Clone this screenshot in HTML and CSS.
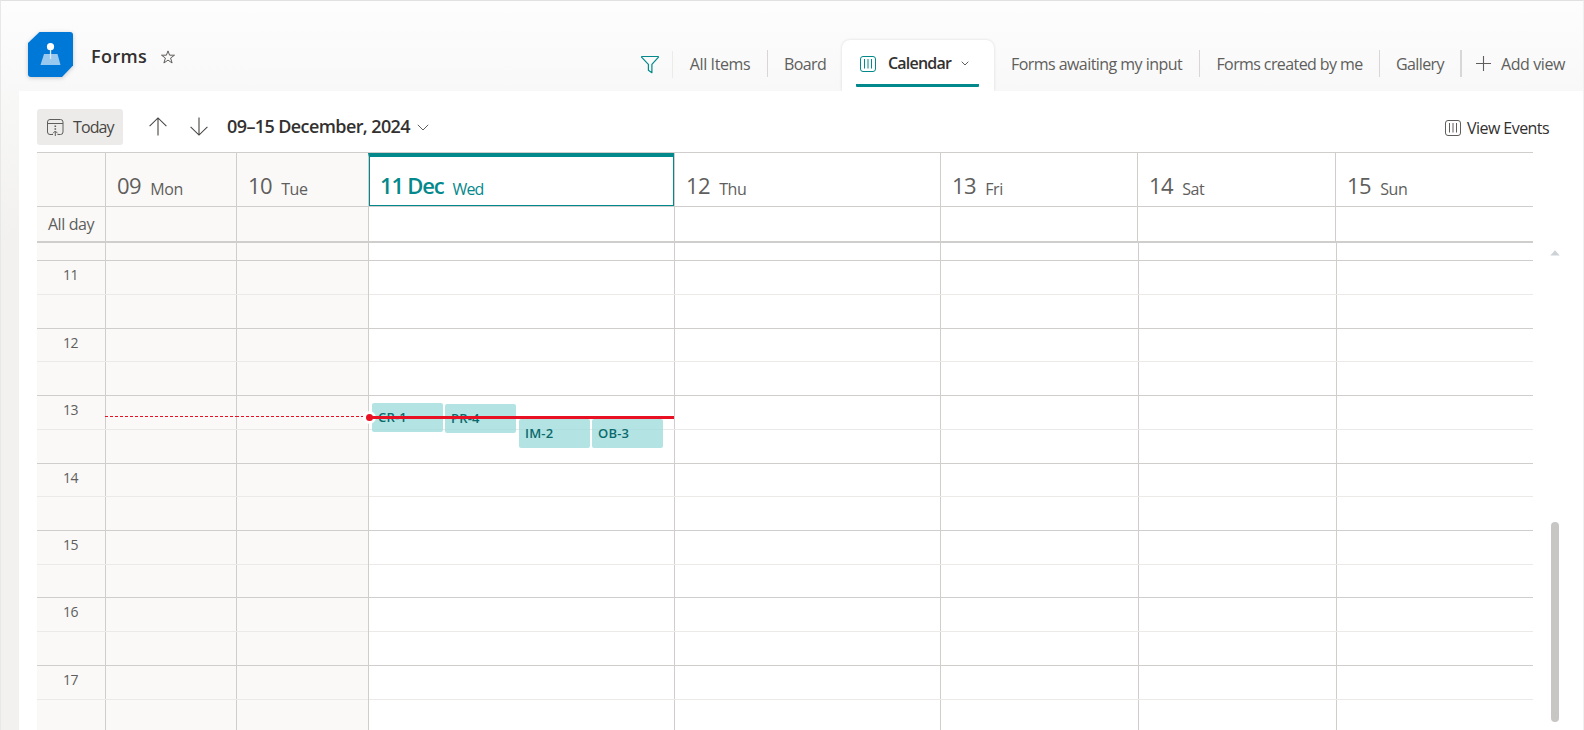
FILE: index.html
```html
<!DOCTYPE html>
<html lang="en">
<head>
    <meta charset="UTF-8">
    <meta name="viewport" content="width=device-width, initial-scale=1.0">
    <title>Forms - Calendar</title>
    <link rel="stylesheet" href="styles.css">
</head>
<body>
    <div class="app">
        <header class="header">
            <div class="brand">
                <svg class="logo" width="45" height="45" viewBox="0 0 45 45">
                    <path d="M11.500 0H42a3 3 0 0 1 3 3v30.500L34 45H3a3 3 0 0 1-3-3V11z" fill="#0078d7"/>
                    <path d="M16 22h13.500l3 11H12.500z" fill="#99c9ef"/>
                    <path d="M21.900 16h1.300v11h-1.300z" fill="#d8ebfa"/>
                    <circle cx="22.500" cy="14.700" r="3.600" fill="#fff"/>
                </svg>
                <h1 class="title">Forms</h1>
                <svg class="star" width="14" height="14" viewBox="0 0 14 14">
                    <path d="M7 .9l1.600 4.300h4.900L9.600 8l1.500 5L7 10.100 2.900 13l1.500-5L.5 5.200h4.900z" fill="none" stroke="#605e5c" stroke-width="1"/>
                </svg>
            </div>
            <nav class="views">
                <button class="filter">
                    <svg width="20" height="20" viewBox="0 0 20 20">
                        <path d="M1.800 1.500h16.400l.3.700-6.600 7.200v8.300l-3.500-2.500V9.400L1.500 2.200z" fill="none" stroke="#03888b" stroke-width="1.200" stroke-linejoin="round"/>
                    </svg>
                </button>
                <a class="view view-all">All Items</a>
                <a class="view view-board">Board</a>
                <a class="view view-active">
                    <span class="view-label">
                        <svg width="16" height="16" viewBox="0 0 16 16" fill="none" stroke="#03888b">
                            <rect x=".5" y=".5" width="15" height="15" rx="2.500"/>
                            <path d="M4.500 3v9.500M8 3v9.500M11.500 3v9.500"/>
                        </svg>
                        <b>Calendar</b>
                        <svg class="caret" width="8" height="5" viewBox="0 0 8 5"><path d="M.7.7L4 4 7.300.7" fill="none" stroke="#605e5c"/></svg>
                    </span>
                </a>
                <a class="view view-awaiting">Forms awaiting my input</a>
                <a class="view view-created">Forms created by me</a>
                <a class="view view-gallery">Gallery</a>
                <a class="view view-add">
                    <svg width="15" height="15" viewBox="0 0 15 15"><path d="M7.500 0v15M0 7.500h15" stroke="#605e5c" stroke-width="1.100"/></svg>
                    <span>Add view</span>
                </a>
            </nav>
        </header>

        <main class="panel">
            <div class="toolbar">
                <button class="today">
                    <svg width="17" height="17" viewBox="0 0 17 17" fill="none" stroke="#605e5c">
                        <path d="M6 15.500H3A2.500 2.500 0 0 1 .5 13V3A2.500 2.500 0 0 1 3 .5h10.500A2.500 2.500 0 0 1 16 3v10a2.500 2.500 0 0 1-2.500 2.500h-3M.5 4.500H16"/>
                        <path d="M8.300 17v-4.500M6 14.300l2.300-2.300 2.300 2.300"/>
                        <path d="M7.500 7.200h1.600M7.500 10h1.600" stroke-width="1.400"/>
                    </svg>
                    <span>Today</span>
                </button>
                <svg class="arrow-up" width="18" height="19" viewBox="0 0 18 19"><path d="M9 18.500V1M.6 9.200L9 .9l8.400 8.300" fill="none" stroke="#484644" stroke-width="1.100"/></svg>
                <svg class="arrow-down" width="18" height="19" viewBox="0 0 18 19"><path d="M9 .5V18M.6 9.800L9 18.100l8.400-8.300" fill="none" stroke="#484644" stroke-width="1.100"/></svg>
                <span class="range">09–15 December, 2024</span>
                <svg class="range-caret" width="12" height="7" viewBox="0 0 12 7"><path d="M.8.8L6 6 11.200.8" fill="none" stroke="#605e5c"/></svg>
                <a class="view-events">
                    <svg width="16" height="16" viewBox="0 0 16 16" fill="none" stroke="#605e5c">
                        <rect x=".5" y=".5" width="15" height="15" rx="2.500"/>
                        <path d="M4.500 3v9.500M8 3v9.500M11.500 3v9.500"/>
                    </svg>
                    <span>View Events</span>
                </a>
            </div>

            <div class="calendar">
                <div class="days">
                    <div class="past"></div>
                    <div class="day past"><b>09</b><span>Mon</span></div>
                    <div class="day past"><b>10</b><span>Tue</span></div>
                    <div class="day current"><b>11 Dec</b><span>Wed</span></div>
                    <div class="day"><b>12</b><span>Thu</span></div>
                    <div class="day"><b>13</b><span>Fri</span></div>
                    <div class="day"><b>14</b><span>Sat</span></div>
                    <div class="day"><b>15</b><span>Sun</span></div>
                </div>
                <div class="all-day">
                    <div class="past">All day</div>
                    <div class="cell past"></div>
                    <div class="cell past"></div>
                    <div class="cell"></div>
                    <div class="cell"></div>
                    <div class="cell"></div>
                    <div class="cell"></div>
                    <div class="cell"></div>
                </div>

                <div class="scroll-area">
                    <div class="hours">
                        <div class="slot"></div>
                        <div class="slot hour">11</div>
                        <div class="slot half"></div>
                        <div class="slot hour">12</div>
                        <div class="slot half"></div>
                        <div class="slot hour">13</div>
                        <div class="slot half"></div>
                        <div class="slot hour">14</div>
                        <div class="slot half"></div>
                        <div class="slot hour">15</div>
                        <div class="slot half"></div>
                        <div class="slot hour">16</div>
                        <div class="slot half"></div>
                        <div class="slot hour">17</div>
                        <div class="slot half"></div>
                    </div>
                    <div class="columns">
                        <div class="past"></div>
                        <div class="cell past"><i class="now-dashed"></i></div>
                        <div class="cell past"><i class="now-dashed last"></i></div>
                        <div class="cell today-column">
                            <div class="event event-cr">CR-1</div>
                            <div class="event event-pr">PR-4</div>
                            <div class="event event-im">IM-2</div>
                            <div class="event event-ob">OB-3</div>
                            <i class="now-dot"></i>
                            <i class="now-line"></i>
                        </div>
                        <div class="cell"></div>
                        <div class="cell"></div>
                        <div class="cell"></div>
                        <div class="cell"></div>
                    </div>
                </div>
            </div>

            <div class="scrollbar">
                <svg width="10" height="6" viewBox="0 0 10 6"><path d="M5 .3L9.700 5.500H.3z" fill="#cdd2d6"/></svg>
                <div class="thumb"></div>
            </div>
        </main>
    </div>
</body>
</html>
```
FILE: styles.css
```css
* {
    box-sizing: border-box;
}

body {
    margin: 0;
    font-family: "Segoe UI", "Open Sans", sans-serif;
    font-size: 16px;
    line-height: 20px;
    letter-spacing: -0.4px;
    color: #605e5c;
    overflow: hidden;
}

button {
    font: inherit;
    letter-spacing: inherit;
    color: inherit;
    border: none;
    padding: 0;
}

svg {
    display: block;
    flex: none;
}

.app {
    height: 730px;
    border-top: 1px solid #e1e1e1;
    border-left: 1px solid #e8e8e8;
    border-right: 1px solid #f0f0f0;
    background: linear-gradient(#fdfdfd, #f8f8f7 90px, #f2f1ef 240px, #f2f1ef);
}

/* Header */
.header {
    height: 90px;
    display: flex;
    justify-content: space-between;
    background: linear-gradient(#fdfdfd, #fbfbfb 40px, #f8f8f8);
}

.brand {
    display: flex;
    align-items: flex-start;
    padding: 31px 0 0 27px;
}

.logo {
    filter: drop-shadow(0 1px 2px rgba(0, 0, 0, 0.2));
}

.title {
    margin: 12px 0 0 18px;
    width: 70px;
    font-size: 18px;
    line-height: 24px;
    font-weight: 600;
    letter-spacing: 0.4px;
    color: #323130;
}

.star {
    margin-top: 18px;
}

.views {
    display: flex;
    align-items: flex-start;
    padding-top: 39px;
    margin-right: -1px;
}

.filter {
    width: 33px;
    height: 27px;
    margin-top: 11px;
    padding-bottom: 0;
    background: none;
    border-right: 1px solid #ecebea;
}

.view {
    height: 27px;
    margin-top: 10px;
    line-height: 29px;
    text-align: center;
    white-space: nowrap;
    border-right: 1px solid #d8d7d6;
}

.view-all {
    width: 95px;
}

.view-board {
    width: 74px;
    letter-spacing: -0.6px;
    border: none;
}

.view-active {
    width: 152px;
    height: 51px;
    margin-top: 0;
    padding: 0 15px 0 14px;
    border: none;
    border-radius: 8px 8px 0 0;
    background: #fff;
    box-shadow: 0 0 3px rgba(0, 0, 0, 0.14);
    clip-path: inset(-4px -4px 0 -4px);
}

.view-label {
    height: 47px;
    display: flex;
    align-items: center;
    padding: 3px 0 0 4px;
    border-bottom: 3px solid #03888b;
    border-radius: 1px;
}

.view-label b {
    width: 73px;
    margin-left: 12px;
    text-align: left;
    font-weight: 600;
    letter-spacing: -0.8px;
    color: #323130;
}

.view-awaiting {
    width: 206px;
    letter-spacing: -0.55px;
}

.view-created {
    width: 180px;
    letter-spacing: -0.6px;
}

.view-gallery {
    width: 82px;
    letter-spacing: -0.6px;
    border-right-width: 2px;
}

.view-add {
    width: 122px;
    display: flex;
    align-items: center;
    gap: 10px;
    padding-left: 14px;
    border: none;
}

.view-add span {
    padding-top: 1px;
}

/* Panel under the header */
.panel {
    position: relative;
    height: 639px;
    margin-left: 18px;
    padding: 0 50px 0 18px;
    background: #fff;
}

.toolbar {
    height: 61px;
    display: flex;
    align-items: center;
    padding-top: 10px;
    margin-right: -16px;
    color: #323130;
}

.today {
    width: 86px;
    height: 36px;
    display: flex;
    align-items: center;
    gap: 9px;
    padding: 1px 0 0 10px;
    border-radius: 3px;
    background: #edebe9;
    color: #484644;
    letter-spacing: -0.9px;
}

.arrow-up {
    margin-left: 26px;
}

.arrow-down {
    margin-left: 23px;
}

.range {
    width: 190px;
    margin: -1px 0 0 19px;
    font-size: 18px;
    font-weight: 600;
    letter-spacing: -0.6px;
    white-space: nowrap;
}

.range-caret {
    margin-top: 2px;
}

.view-events {
    width: 104px;
    display: flex;
    gap: 6px;
    align-items: center;
    margin: 3px 0 0 auto;
    letter-spacing: -0.55px;
    white-space: nowrap;
}

/* Calendar grid */
.days,
.all-day,
.columns {
    display: grid;
    grid-template-columns: 68px 131px 132px 306px 266px 197px 198px 198px;
}

.columns {
    grid-template-columns: 68px 131px 132px 306px 266px 198px 198px 197px;
}

.past {
    background: #faf9f8;
}

.days {
    height: 55px;
    border-top: 1px solid #cfcecd;
    border-bottom: 1px solid #cfcecd;
}

.day {
    display: flex;
    align-items: flex-start;
    gap: 9px;
    padding: 17px 0 0 11px;
    border-left: 1px solid #cfcecd;
}

.day b {
    font-size: 22px;
    line-height: 30px;
    font-weight: 400;
    letter-spacing: -0.5px;
}

.day span {
    padding-top: 9px;
}

.day.current {
    padding: 13px 0 0 11px;
    box-shadow: inset 1px 0 #03888b, inset -1px 0 #03888b, inset 0 -1px #03888b;
    border-top: 4px solid #03888b;
    color: #03888b;
}

.day.current b {
    font-weight: 600;
    letter-spacing: -1.2px;
}

.day.current span {
    letter-spacing: -0.8px;
}

.all-day {
    height: 36px;
    line-height: 34px;
    text-align: center;
    border-bottom: 2px solid #cfcecd;
}

.cell {
    border-left: 1px solid #cfcecd;
}

.scroll-area {
    display: grid;
    height: 487px;
    overflow: hidden;
}

.hours,
.columns {
    grid-area: 1 / 1;
}

.hours {
    z-index: 1;
    display: grid;
    grid-template-rows: 17px 34px 34px 33px 34px 34px 34px 33px 34px 34px 33px 34px 34px 34px 31px;
}

.slot {
    padding-top: 4px;
    font-size: 14px;
    line-height: 19px;
    text-indent: 26px;
}

.hour {
    border-top: 1px solid #cfcecd;
}

.half {
    border-top: 1px solid #ebeae9;
}

.today-column,
.columns .past {
    position: relative;
}

/* Events and the current time marker lie over the slots */
.today-column {
    z-index: 2;
}

.event {
    position: absolute;
    width: 71px;
    height: 29px;
    padding-left: 6px;
    border-radius: 2px;
    background: rgba(153, 217, 217, 0.75);
    color: #0b6a6c;
    font-size: 13px;
    line-height: 28px;
    font-weight: 600;
    letter-spacing: 0.2px;
}

.event-cr {
    left: 3px;
    top: 160px;
}

.event-pr {
    left: 76px;
    top: 161px;
}

.event-im {
    left: 150px;
    top: 176px;
}

.event-ob {
    left: 223px;
    top: 176px;
}

.now-line {
    position: absolute;
    top: 173px;
    left: 0;
    width: 305px;
    height: 3px;
    background: #e81123;
}

.now-dot {
    position: absolute;
    top: 171px;
    left: -3px;
    width: 7px;
    height: 7px;
    border-radius: 50%;
    background: #e81123;
    box-shadow: 0 0 0 3px rgba(255, 255, 255, 0.9);
}

.now-dashed {
    position: absolute;
    z-index: 2;
    top: 173px;
    left: -1px;
    right: 0;
    height: 1px;
    background: repeating-linear-gradient(90deg, #e81123 0 3px, transparent 3px 5px);
}

.now-dashed.last {
    right: 5px;
}

/* Scrollbar */
.scrollbar {
    position: absolute;
    top: 159px;
    right: 23px;
    width: 10px;
}

.thumb {
    width: 8px;
    height: 200px;
    margin: 266px 0 0 1px;
    border-radius: 4px;
    background: #c8c6c4;
}
```
